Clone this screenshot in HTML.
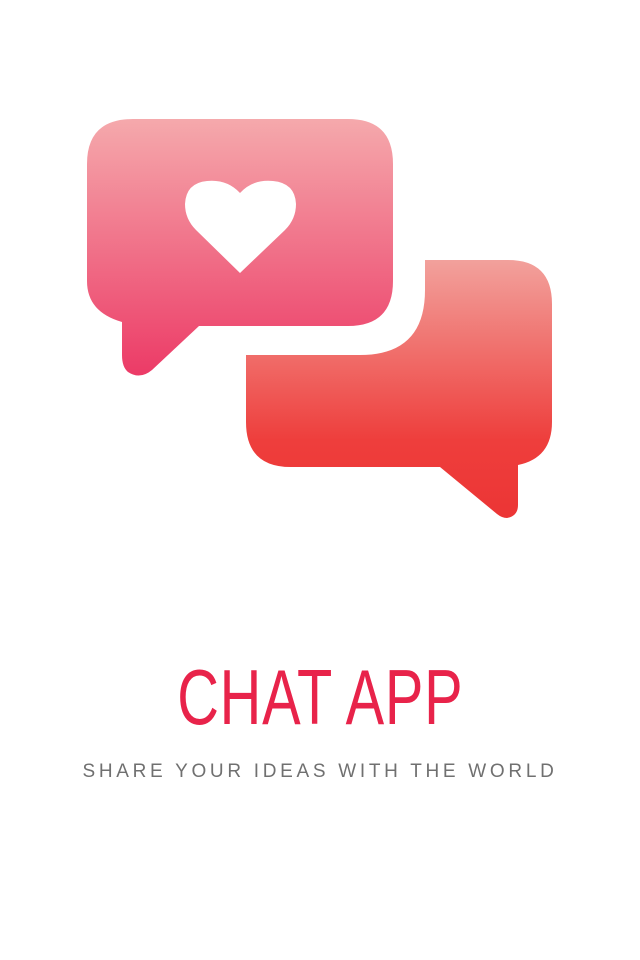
<!DOCTYPE html>
<html><head><meta charset="utf-8"><style>
html,body{margin:0;padding:0;background:#fff;width:640px;height:960px;overflow:hidden;position:relative}
.t{position:absolute;left:0;width:640px;text-align:center;font-family:"Liberation Sans Narrow","Liberation Sans",sans-serif}
#h{top:652px;font-size:78px;color:#e8234a;font-weight:normal;letter-spacing:1px}
#h span{display:inline-block;transform:scaleX(0.74);transform-origin:center}
#s{top:761px;font-family:"Liberation Sans",sans-serif;font-size:19px;color:#707070;letter-spacing:3.7px}
</style></head><body>
<svg width="640" height="960" style="position:absolute;left:0;top:0">
<defs>
<linearGradient id="g1" x1="0" y1="119" x2="0" y2="377" gradientUnits="userSpaceOnUse">
<stop offset="0" stop-color="#f5a9ac"/><stop offset="1" stop-color="#ec3a66"/></linearGradient>
<linearGradient id="g2" x1="0" y1="260" x2="0" y2="518" gradientUnits="userSpaceOnUse">
<stop offset="0" stop-color="#f2a19c"/><stop offset="0.7" stop-color="#ee3e3c"/><stop offset="1" stop-color="#ec3535"/></linearGradient>
</defs>
<path fill="url(#g1)" d="M133 119 H348 Q393 119 393 164 V281 Q393 326 348 326 H199 L152 370 Q140 380 128 372 Q122 367 122 355 V322 Q87 312 87 281 V164 Q87 119 133 119 Z"/>
<path fill="#fff" d="M240 273 L196 230 Q185 219 185 204 Q186 183 207 181 Q227 179 240 193 Q253 179 273 181 Q295 183 296 204 Q296 219 285 230 Z"/>
<path fill="url(#g2)" d="M425 260 H508 Q552 260 552 304 V422 Q552 458 518 465 V505 Q518 516 507 518 Q502 518 497 514 L440 467 H291 Q246 467 246 422 V355 H360 Q425 355 425 290 Z"/>
</svg>
<div class="t" id="h"><span>CHAT APP</span></div>
<div class="t" id="s">SHARE YOUR IDEAS WITH THE WORLD</div>
</body></html>
